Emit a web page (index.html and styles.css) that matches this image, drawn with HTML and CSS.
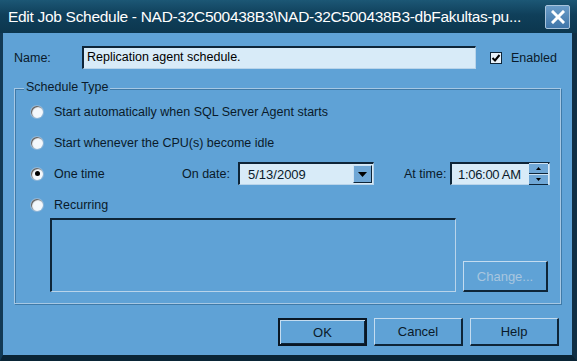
FILE: index.html
```html
<!DOCTYPE html>
<html lang="en">
<head>
    <meta charset="UTF-8">
    <title>Edit Job Schedule</title>
    <link rel="stylesheet" href="styles.css">
</head>
<body>

<div class="window">
    <div class="titlebar">
        <span class="title">Edit Job Schedule - NAD-32C500438B3\NAD-32C500438B3-dbFakultas-pu...</span>
        <span class="close">
            <svg width="14" height="14" viewBox="0 0 14 14"><path d="M2 2 L12 12 M12 2 L2 12" stroke="#fff" stroke-width="3" stroke-linecap="square"/></svg>
        </span>
    </div>

    <div class="content">
        <div class="name-row">
            <span class="name-label">Name:</span>
            <div class="textbox name-box">Replication agent schedule.</div>
            <span class="check">
                <svg width="10" height="10" viewBox="0 0 10 10"><path d="M1.5 5 L4 7.5 L8.5 2" fill="none" stroke="#000" stroke-width="2"/></svg>
            </span>
            <span class="enabled">Enabled</span>
        </div>

        <div class="group">
            <span class="legend">Schedule Type</span>

            <div class="option">
                <span class="radio"></span>
                <span>Start automatically when SQL Server Agent starts</span>
            </div>
            <div class="option">
                <span class="radio"></span>
                <span>Start whenever the CPU(s) become idle</span>
            </div>
            <div class="option">
                <span class="radio on"></span>
                <span class="one-time">One time</span>
                <span class="on-date">On date:</span>
                <div class="textbox combo">
                    <span class="combo-text">5/13/2009</span>
                    <span class="drop">
                        <svg width="9" height="5" viewBox="0 0 9 5"><path d="M0 0 H9 L4.5 5 Z" fill="#000"/></svg>
                    </span>
                </div>
                <span class="at-time">At time:</span>
                <div class="textbox timebox">
                    <span class="time-text">1:06:00 AM</span>
                    <span class="spin">
                        <span class="spin-btn"><svg width="5" height="3" viewBox="0 0 5 3"><path d="M0 3 H5 L2.5 0 Z" fill="#000"/></svg></span>
                        <span class="spin-btn"><svg width="5" height="3" viewBox="0 0 5 3"><path d="M0 0 H5 L2.5 3 Z" fill="#000"/></svg></span>
                    </span>
                </div>
            </div>
            <div class="option">
                <span class="radio"></span>
                <span>Recurring</span>
            </div>

            <div class="recurring-row">
                <div class="recurring-box"></div>
                <div class="button change">Change...</div>
            </div>
        </div>

        <div class="footer">
            <div class="button default">OK</div>
            <div class="button">Cancel</div>
            <div class="button">Help</div>
        </div>
    </div>
</div>

</body>
</html>
```

FILE: styles.css
```css
body {
    margin: 0;
    padding: 0;
    font-family: 'Liberation Sans', Arial, sans-serif;
    background-color: #0b2233;
}

.window {
    width: 577px;
    height: 361px;
    box-sizing: border-box;
    background-color: #5fa2d6;
    border-left: 3px solid #123a55;
    border-right: 5px solid #0f2f45;
    border-bottom: 6px solid #0a2536;
    color: #0a1a2a;
}

.titlebar {
    height: 33px;
    margin-left: -3px;
    margin-right: -5px;
    background: linear-gradient(#1c5775, #0f3f5a 45%, #0c364e);
    display: flex;
    align-items: center;
    padding: 0 7px 0 8px;
    box-sizing: border-box;
}

.title {
    flex: 1;
    color: #fff;
    font-size: 15.5px;
    letter-spacing: -0.3px;
    white-space: nowrap;
}

.close {
    width: 25px;
    height: 24px;
    box-sizing: border-box;
    border: 1px solid #a9c4dc;
    border-radius: 2px;
    background: linear-gradient(#6a9cc8, #3f75a8);
    display: flex;
    align-items: center;
    justify-content: center;
}

.content {
    padding: 13px 11px 0 11px;
    font-size: 12.5px;
}

.name-row {
    display: flex;
    align-items: center;
    height: 23px;
}

.name-label {
    width: 68px;
}

.textbox {
    background-color: #d8ebf8;
    border-top: 2px solid #0e2538;
    border-left: 2px solid #0e2538;
    border-bottom: 1px solid #b9d4ea;
    border-right: 1px solid #b9d4ea;
    box-sizing: border-box;
    height: 23px;
}

.name-box {
    width: 394px;
    padding: 2px 3px;
    font-size: 12.5px;
    color: #000;
}

.check {
    width: 12px;
    height: 12px;
    margin-left: 14px;
    box-sizing: border-box;
    border: 1px solid #0e2538;
    background-color: #e8f2fa;
    display: flex;
    align-items: center;
    justify-content: center;
}

.enabled {
    margin-left: 9px;
}

.group {
    position: relative;
    margin-top: 19px;
    width: 547px;
    height: 216px;
    box-sizing: border-box;
    border: 1px solid #a6c8e4;
    box-shadow: inset 1px 1px 0 #3f7aa8, 1px 1px 0 #3f7aa8;
    padding: 7px 0 0 16px;
}

.legend {
    position: absolute;
    top: -9px;
    left: 9px;
    padding: 0 2px;
    background-color: #5fa2d6;
}

.option {
    display: flex;
    align-items: center;
    height: 31px;
}

.radio {
    width: 12px;
    height: 12px;
    border-radius: 50%;
    background-color: #f4f8fc;
    box-shadow: inset 1px 1px 1px #555, 0 0 0 1px #8fb6d8;
    margin-right: 11px;
    position: relative;
}

.radio.on::after {
    content: '';
    position: absolute;
    left: 3.5px;
    top: 3.5px;
    width: 5px;
    height: 5px;
    border-radius: 50%;
    background-color: #000;
}

.one-time {
    width: 128px;
}

.on-date {
    width: 56px;
}

.combo {
    width: 136px;
    display: flex;
    align-items: center;
    padding-left: 8px;
}

.combo-text {
    flex: 1;
    font-size: 13px;
}

.drop {
    width: 19px;
    height: 18px;
    margin-right: 1px;
    box-sizing: border-box;
    background-color: #6fa7d6;
    border-top: 1px solid #cde2f3;
    border-left: 1px solid #cde2f3;
    border-bottom: 1px solid #0e2538;
    border-right: 1px solid #0e2538;
    display: flex;
    align-items: center;
    justify-content: center;
}

.at-time {
    margin-left: 30px;
    width: 46px;
}

.timebox {
    width: 100px;
    display: flex;
    align-items: center;
    padding-left: 6px;
}

.time-text {
    flex: 1;
    font-size: 13px;
    letter-spacing: -0.3px;
}

.spin {
    display: flex;
    flex-direction: column;
    width: 19px;
    margin-right: 1px;
}

.spin-btn {
    height: 9px;
    background-color: #6fa7d6;
    border-top: 1px solid #cde2f3;
    border-bottom: 1px solid #0e2538;
    display: flex;
    align-items: center;
    justify-content: center;
}

.recurring-row {
    display: flex;
    align-items: flex-end;
    margin-left: 19px;
    margin-top: -2px;
}

.recurring-box {
    width: 406px;
    height: 74px;
    box-sizing: border-box;
    border-top: 2px solid #0e2538;
    border-left: 2px solid #0e2538;
    border-bottom: 1px solid #b9d4ea;
    border-right: 1px solid #b9d4ea;
}

.button {
    display: flex;
    align-items: center;
    justify-content: center;
    box-sizing: border-box;
    width: 89px;
    height: 28px;
    background-color: #5fa2d6;
    border-top: 1px solid #c4dcf0;
    border-left: 1px solid #c4dcf0;
    border-bottom: 2px solid #0e2538;
    border-right: 2px solid #0e2538;
    font-size: 13px;
}

.change {
    width: 85px;
    height: 31px;
    margin-left: 7px;
    color: #a8c6df;
}

.button.default {
    border: 2px solid #0a1724;
    box-shadow: inset 1px 1px 0 #c4dcf0, inset -1px -1px 0 #0e2538;
}

.footer {
    display: flex;
    justify-content: flex-end;
    gap: 7px;
    margin-top: 14px;
    margin-right: 2px;
}
```
